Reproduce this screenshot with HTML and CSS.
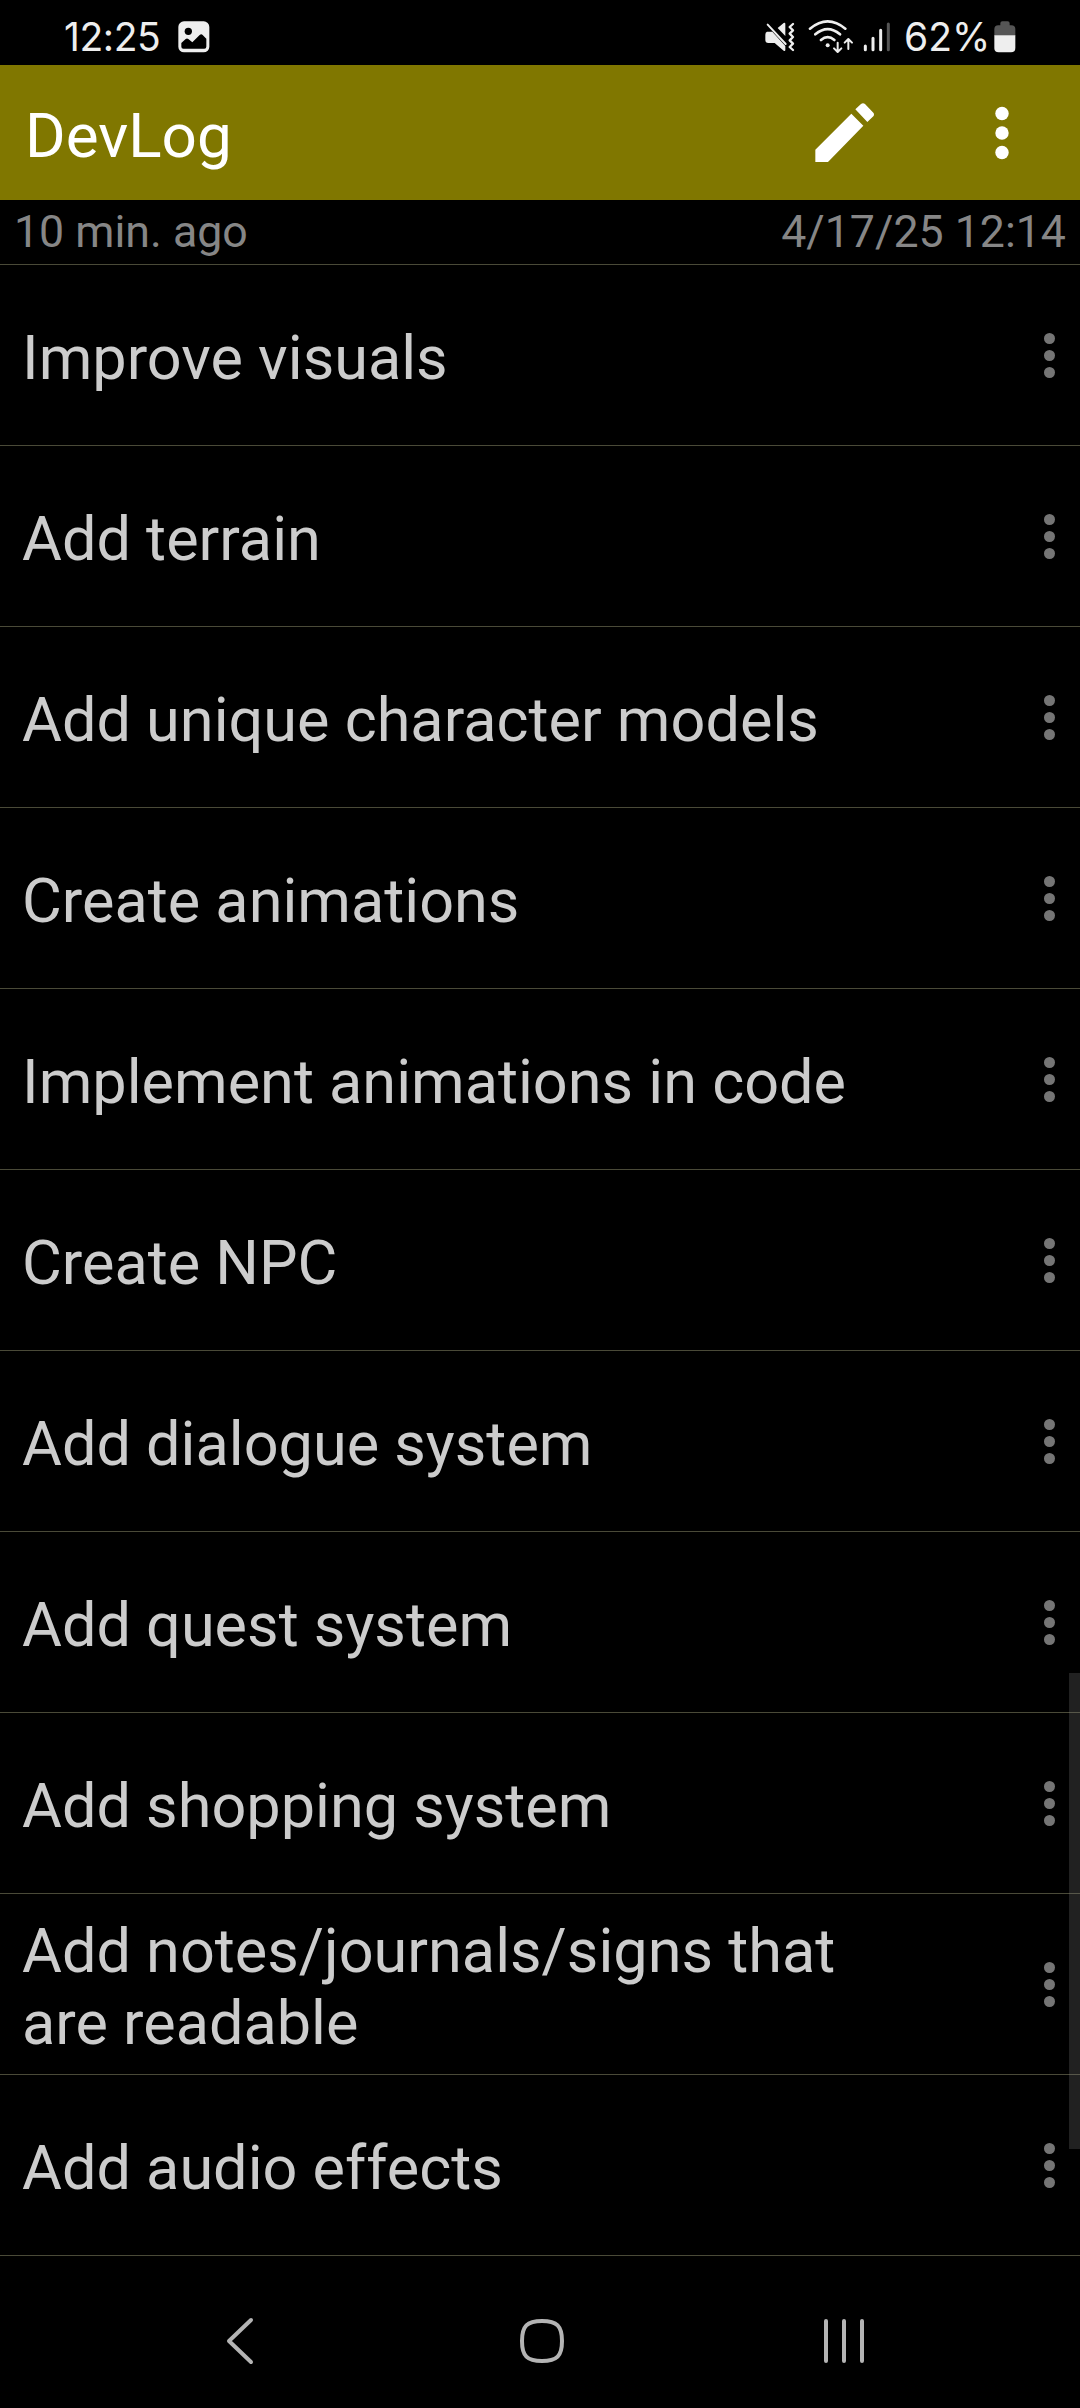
FILE: index.html
```html
<!DOCTYPE html>
<html lang="en">
<head>
	<meta charset="UTF-8">
	<title>DevLog</title>
	<link rel="stylesheet" href="styles.css">
</head>
<body>
	<div class="status">
		<span class="clock">12:25</span>
		<svg class="picture" width="32" height="32" viewBox="533 62 96 96">
			<rect x="534" y="63" width="93" height="93" rx="17" fill="#eee"/>
			<circle cx="564" cy="93" r="11" fill="#000"/>
			<path d="M543 128l13-12q4-3 8 0l12 10 22-22q5-4 9 0l11 11v24q0 6-6 6h-63q-6 0-6-6z" fill="#000"/>
		</svg>
		<svg class="mute" width="34" height="36" viewBox="72 57 102 108">
			<path d="M116 84l18-15q5-3 5 3v36zM84 95h16l39 43v11q0 6-5 3l-27-23H88q-9 0-9-9v-16q0-7 5-9z" fill="#eee"/>
			<path d="M86 74l54 58" stroke="#eee" stroke-width="6" stroke-linecap="round"/>
			<path d="M162 72l-10 9 10 10-10 10 10 10-10 10 10 10-10 10 10 9" fill="none" stroke="#eee" stroke-width="7" stroke-linecap="round" stroke-linejoin="round"/>
		</svg>
		<svg class="wifi" width="46" height="36" viewBox="207 57 138 108">
			<g fill="none" stroke="#eee" stroke-width="8" stroke-linecap="round">
				<path d="M213 86q53-44 106 0M229 103q37-31 74 0M246 120q20-17 40 0"/>
				<path d="M296 128v27M285 145l11 11 11-11M328 147v-29M317 128l11-11 11 11" stroke-width="6" stroke-linejoin="round"/>
			</g>
			<circle cx="266" cy="136" r="6" fill="#eee"/>
		</svg>
		<svg class="signal" width="28" height="30" viewBox="371 65 84 90">
			<g stroke="#eee" stroke-width="9" stroke-linecap="round">
				<path d="M378 137v11M401 114v34M424 90v58"/>
				<path d="M447 71v77" stroke="#555"/>
			</g>
		</svg>
		<span class="percent">62%</span>
		<svg class="battery" width="22" height="32" viewBox="764 62 66 96">
			<path d="M765 106V86q0-10 12-11h6v-6q0-6 6-6h16q6 0 6 6v6h5q12 1 12 11v20z" fill="#555"/>
			<path d="M765 105h63v38q0 13-13 13h-37q-13 0-13-13z" fill="#eee"/>
		</svg>
	</div>

	<div class="header">
		<h1>DevLog</h1>
		<svg class="pencil" width="60" height="60" viewBox="226 310 180 180">
			<path d="M227 487v-37l108-108 36 36-106 109zM347 329l17-16q6-4 12 0l25 26q4 5 0 11l-18 17z" fill="#fff"/>
		</svg>
		<svg class="more" width="14" height="54" viewBox="0 0 14 54">
			<g fill="#fff"><circle cx="7" cy="7.5" r="6.7"/><circle cx="7" cy="27" r="6.7"/><circle cx="7" cy="46.5" r="6.7"/></g>
		</svg>
	</div>

	<div class="info">
		<span>10 min. ago</span>
		<span>4/17/25 12:14</span>
	</div>

	<ul class="list">
		<li><p>Improve visuals</p><div class="dots"><i></i><i></i><i></i></div></li>
		<li><p>Add terrain</p><div class="dots"><i></i><i></i><i></i></div></li>
		<li><p>Add unique character models</p><div class="dots"><i></i><i></i><i></i></div></li>
		<li><p>Create animations</p><div class="dots"><i></i><i></i><i></i></div></li>
		<li><p>Implement animations in code</p><div class="dots"><i></i><i></i><i></i></div></li>
		<li><p>Create NPC</p><div class="dots"><i></i><i></i><i></i></div></li>
		<li><p>Add dialogue system</p><div class="dots"><i></i><i></i><i></i></div></li>
		<li><p>Add quest system</p><div class="dots"><i></i><i></i><i></i></div></li>
		<li><p>Add shopping system</p><div class="dots"><i></i><i></i><i></i></div></li>
		<li><p>Add notes/journals/signs that<br>are readable</p><div class="dots"><i></i><i></i><i></i></div></li>
		<li><p>Add audio effects</p><div class="dots"><i></i><i></i><i></i></div></li>
	</ul>
	<div class="scrollbar"></div>

	<div class="nav">
		<svg width="50" height="50" viewBox="0 0 50 50"><path d="M36 4L14 25l22 21"/></svg>
		<svg width="50" height="50" viewBox="0 0 50 50"><path d="M25 5C40 5 45 10 45 25S40 45 25 45 5 40 5 25 10 5 25 5z"/></svg>
		<svg width="50" height="50" viewBox="0 0 50 50"><path d="M7 5v40M25 5v40M43 5v40"/></svg>
	</div>
</body>
</html>
```

FILE: styles.css
```css
body {
	margin: 0;
	width: 1080px;
	height: 2408px;
	position: relative;
	overflow: hidden;
	background-color: #000;
	font-family: Roboto, sans-serif;
}

h1, p, ul, li {
	margin: 0;
	padding: 0;
}

ul {
	list-style: none;
}

svg {
	display: block;
	flex: none;
}

.status {
	height: 65px;
	display: flex;
	align-items: center;
	box-sizing: border-box;
	padding: 8px 64px 0 64px;
	font-family: Inter, sans-serif;
	font-size: 39px;
	color: #eee;
}

.clock {
	width: 114px;
	letter-spacing: -0.4px;
	white-space: nowrap;
}

.mute {
	margin-left: auto;
}

.wifi {
	margin-left: 11px;
}

.signal {
	margin-left: 9px;
}

.percent {
	width: 90px;
	margin-left: 13px;
	white-space: nowrap;
}

.header {
	height: 135px;
	display: flex;
	align-items: center;
	box-sizing: border-box;
	padding: 0 71px 0 25px;
	background-color: #807700;
}

.header h1 {
	flex: 1;
	font-size: 62px;
	font-weight: 400;
	line-height: 72px;
	padding-top: 6px;
	color: #fff;
}

.more {
	margin-left: 120px;
}

.info {
	height: 64px;
	display: flex;
	justify-content: space-between;
	padding: 0 14px;
	border-bottom: 1px solid #4a4a38;
	font-size: 44.7px;
	line-height: 65px;
	color: #868686;
}

.list li {
	height: 180px;
	display: flex;
	align-items: center;
	justify-content: space-between;
	padding: 0 25px 0 22px;
	border-bottom: 1px solid #4a4a38;
	font-size: 61.2px;
	line-height: 72px;
	color: #ccc;
}

.list p {
	padding-top: 6px;
}

.dots {
	display: flex;
	flex-direction: column;
	gap: 6px;
}

.dots i {
	width: 11px;
	height: 11px;
	border-radius: 50%;
	background-color: #757575;
}

/* lies over the right edge of the list */
.scrollbar {
	position: absolute;
	top: 1673px;
	right: 0;
	width: 11px;
	height: 476px;
	background-color: rgba(128, 128, 128, 0.26);
}

.nav {
	height: 152px;
	display: grid;
	grid-template-columns: repeat(3, 1fr);
	align-items: center;
	justify-items: center;
	box-sizing: border-box;
	padding: 18px 85px 0 89px;
}

.nav path {
	fill: none;
	stroke: #b4b4b4;
	stroke-width: 4;
	stroke-linecap: round;
	stroke-linejoin: round;
}
```
